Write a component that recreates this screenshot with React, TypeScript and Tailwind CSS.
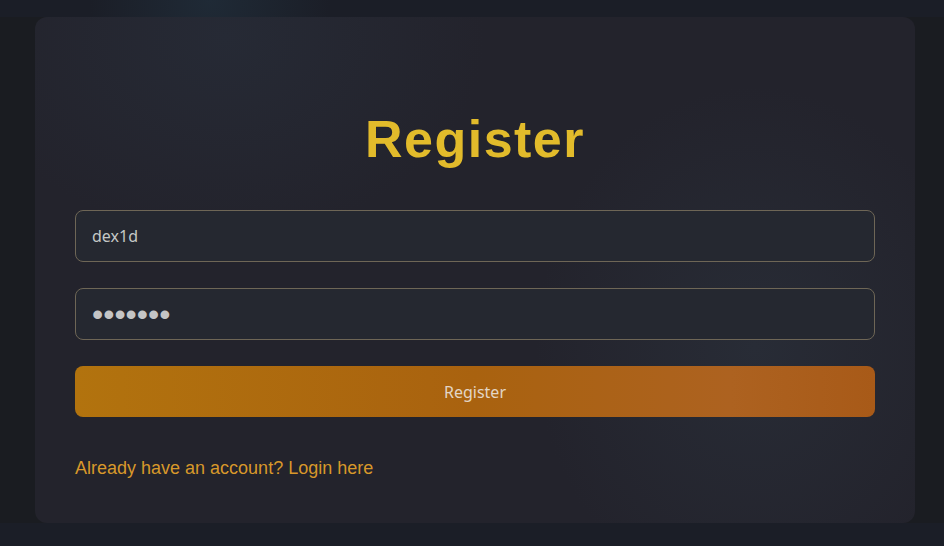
import { useState } from "react";

const App = () => {
  const [username, setUsername] = useState("dex1d");
  const [password, setPassword] = useState("1234567");

  return (
    <div className="h-screen w-full overflow-hidden bg-[#1b1e27] bg-[radial-gradient(circle_at_210px_0px,#1f2a36_0%,transparent_120px)] pt-[17px]">
      <div className="h-[506px] bg-[#1a1c21] pl-[35px]">
        <div className="h-full w-[880px] rounded-xl bg-[#23232c] bg-[radial-gradient(ellipse_260px_200px_at_190px_20px,#262a35_0%,transparent_100%),radial-gradient(ellipse_220px_260px_at_720px_330px,#282c36_0%,transparent_100%)] px-10 pt-[94px]">
          <h1 className="mb-[43px] text-center font-['Liberation_Sans',Arial,sans-serif] text-[52px] leading-[56px] font-bold tracking-[1.5px] text-[#e2bb2b]">
            Register
          </h1>

          <form
            className="flex flex-col gap-[26px]"
            onSubmit={(e) => e.preventDefault()}
          >
            <input
              type="text"
              value={username}
              onChange={(e) => setUsername(e.target.value)}
              className="h-[52px] w-full rounded-lg border border-[#6e6656] bg-[#252830] px-4 font-['Noto_Sans',sans-serif] text-base text-[#c4c8c6] outline-none"
            />
            <input
              type="password"
              value={password}
              onChange={(e) => setPassword(e.target.value)}
              className="h-[52px] w-full rounded-lg border border-[#6e6656] bg-[#252830] px-4 font-['Liberation_Sans',Arial,sans-serif] text-[32px] text-[#c5c5c5] outline-none"
            />
            <button
              type="submit"
              className="h-[51px] w-full rounded-lg bg-[linear-gradient(90deg,#b2730e_0%,#a9620f_50%,#ad6220_82%,#a85a18_100%)] font-['Noto_Sans',sans-serif] text-base text-[#e3d6c6]"
            >
              Register
            </button>
          </form>

          <p className="mt-[38px] font-['Liberation_Sans',Arial,sans-serif] text-lg leading-[27px] text-[#d8982a]">
            <a href="#">Already have an account? Login here</a>
          </p>
        </div>
      </div>
    </div>
  );
};

export default App;
